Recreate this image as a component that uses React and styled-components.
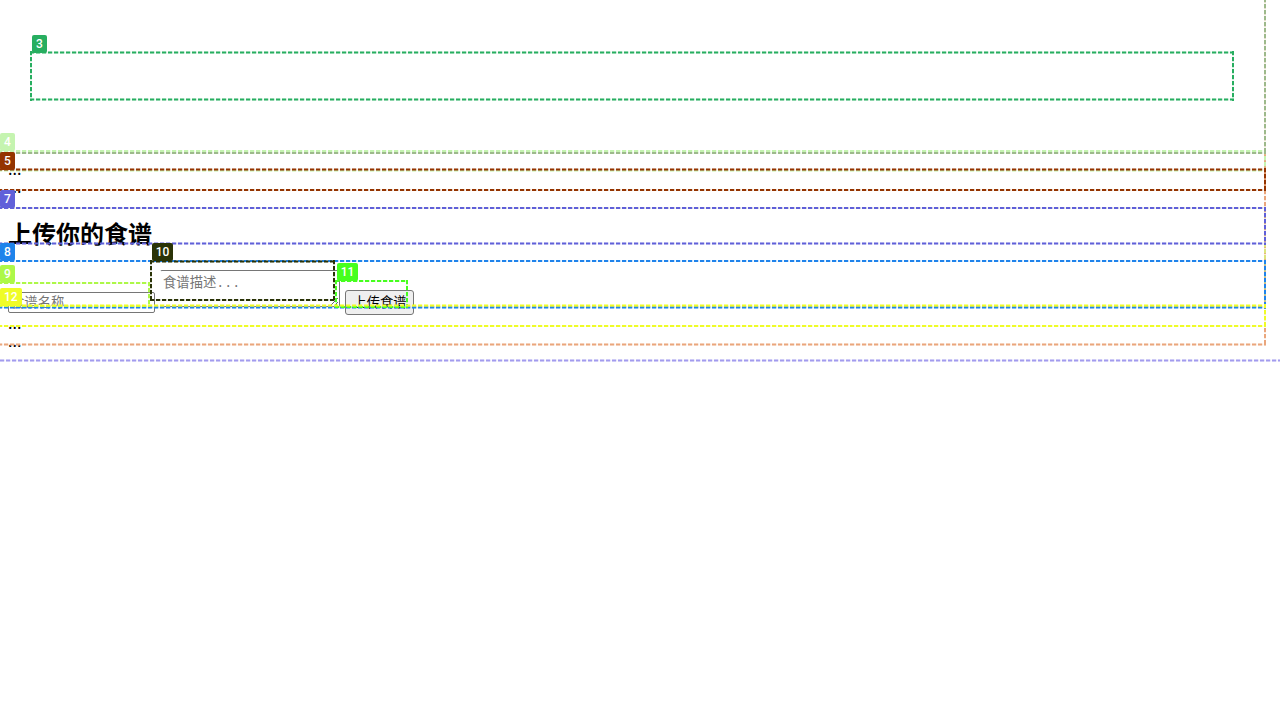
import React from "react";
import styled, { createGlobalStyle } from "styled-components";

const Global = createGlobalStyle`
  html { overflow: hidden; background: #fff; }
  body { margin: 0; font-family: "Liberation Serif", "Noto Sans CJK SC", serif; font-size: 16px; color: #000; }
`;

const Page = styled.main`
  display: flex;
  flex-direction: column;
  padding: 160px 8px 0;
`;

const Line = styled.p`
  margin: 0;
  height: 18px;
  font-family: "Noto Sans CJK SC", sans-serif;
  line-height: 17px;
`;

const Title = styled.h2`
  margin: 22px 0 14px;
  font-size: 24px;
  line-height: 35px;
`;

const Form = styled.form`
  display: flex;
  align-items: flex-end;
  gap: 5px;
  height: 48px;
  margin-bottom: -1px;
`;

const NameInput = styled.input`
  box-sizing: border-box;
  width: 147px;
  height: 21px;
  margin-bottom: 2px;
  padding: 1px 2px;
  border: 1px solid #767676;
  border-radius: 2px;
  font: 13.333px "Liberation Sans", "Noto Sans CJK SC", sans-serif;
  &::placeholder { color: #757575; }
`;

const Description = styled.textarea`
  box-sizing: border-box;
  width: 180px;
  height: 37px;
  margin-bottom: 8px;
  padding: 3px 2px 2px;
  border: 1px solid #767676;
  border-left-color: transparent;
  border-radius: 2px;
  font: 13.333px "Liberation Mono", "Noto Sans CJK SC", monospace;
  line-height: 20px;
  &::placeholder { color: #757575; }
`;

const Submit = styled.button`
  box-sizing: border-box;
  width: 69px;
  height: 25px;
  padding: 0 5px 2px 6px;
  border: 1px solid #767676;
  border-radius: 3px;
  background: #efefef;
  color: #000;
  font: 13.333px "Liberation Sans", "Noto Sans CJK SC", sans-serif;
  white-space: nowrap;
`;

const dashes = (deg, c) =>
  `repeating-linear-gradient(${deg}, ${c} 0 4px, ${c}40 4px 5px, ${c}10 5px 6px)`;

const softDashes = (c) =>
  `repeating-linear-gradient(90deg, ${c}88 0 4px, ${c}20 4px 5px, ${c}08 5px 6px)`;

/* One horizontal side: a crisp 2px rule, or a 3px one with soft outer rows
   where the side falls on a half pixel. */
const side = (edge, soft, c) =>
  soft
    ? [
        `${softDashes(c)} left 0px ${edge} 0px / 100% 1px no-repeat`,
        `${dashes("90deg", c)} left 0px ${edge} 1px / 100% 1px no-repeat`,
        `${softDashes(c)} left 0px ${edge} 2px / 100% 1px no-repeat`,
      ]
    : [`${dashes("90deg", c)} left 0px ${edge} 0px / 100% 2px no-repeat`];

const Outline = styled.div`
  position: absolute;
  pointer-events: none;
  left: ${(p) => p.$x}px;
  top: ${(p) => Math.floor(p.$y)}px;
  width: ${(p) => p.$r - p.$x}px;
  height: ${(p) => Math.ceil(p.$b) - Math.floor(p.$y)}px;
  background: ${(p) =>
    [
      ...side("top", p.$y % 1 !== 0, p.$c),
      ...side("bottom", p.$b % 1 !== 0, p.$c),
      `${dashes("180deg", p.$c)} left 0px top 0px / 2px 100% no-repeat`,
      `${dashes("180deg", p.$c)} right 0px top 0px / 2px 100% no-repeat`,
    ].join(", ")};
`;

const Tag = styled.div`
  position: absolute;
  left: ${(p) => p.$x}px;
  top: ${(p) => p.$y}px;
  width: ${(p) => p.$w}px;
  height: 18px;
  border-radius: 2px;
  background: ${(p) => p.$c};
  color: #fff;
  font: 500 12px/18px Roboto, "Liberation Sans", sans-serif;
  text-align: center;
`;

const outlines = [
  { x: -6, y: -8, r: 1288, b: 361.5, c: "#a29bee" },
  { x: -2, y: -8, r: 1266, b: 345.5, c: "#eaa67c" },
  { x: -2, y: 150, r: 1266, b: 171.5, c: "#c5f4b0" },
  { x: -2, y: -8, r: 1266, b: 154, c: "#9db98b" },
  { x: 30, y: 51.5, r: 1234, b: 100.5, c: "#27ae60" },
  { x: -2, y: 168.5, r: 1266, b: 191, c: "#943400" },
  { x: -2, y: 207, r: 1266, b: 308, c: "#dce57c" },
  { x: -2, y: 207, r: 1266, b: 244.5, c: "#6060d9" },
  { x: -2, y: 260, r: 1266, b: 308.5, c: "#1f83eb" },
  { x: -2, y: 282, r: 150, b: 307, c: "#adf848" },
  { x: 150, y: 260.5, r: 335, b: 301, c: "#2a3307" },
  { x: 335, y: 280, r: 408, b: 308, c: "#46ff1e" },
  { x: -2, y: 304.5, r: 1266, b: 327, c: "#effc27" },
];

const tags = [
  { n: 3, x: 32, y: 34.5, w: 14.67, c: "#27ae60" },
  { n: 4, x: 0, y: 133, w: 14.67, c: "#c5f4b0" },
  { n: 5, x: 0, y: 152, w: 14.67, c: "#943400" },
  { n: 7, x: 0, y: 190, w: 14.67, c: "#6060d9" },
  { n: 8, x: 0, y: 243, w: 14.67, c: "#1f83eb" },
  { n: 9, x: 0, y: 265, w: 14.67, c: "#adf848" },
  { n: 10, x: 152, y: 243, w: 21, c: "#2a3307" },
  { n: 11, x: 337, y: 263, w: 21, c: "#46ff1e" },
  { n: 12, x: 0, y: 288, w: 21.5, c: "#effc27" },
];

export default function App() {
  return (
    <>
      <Global />
      <Page>
        <Line>...</Line>
        <Line>...</Line>
        <Title>上传你的食谱</Title>
        <Form>
          <NameInput placeholder="食谱名称" />
          <Description placeholder="食谱描述..." />
          <Submit type="button">上传食谱</Submit>
        </Form>
        <Line>...</Line>
        <Line>...</Line>
      </Page>
      {outlines.map((o, i) => (
        <Outline key={i} $x={o.x} $y={o.y} $r={o.r} $b={o.b} $c={o.c} />
      ))}
      {tags.map((t) => (
        <Tag key={t.n} $x={t.x} $y={t.y} $w={t.w} $c={t.c}>
          {t.n}
        </Tag>
      ))}
    </>
  );
}
